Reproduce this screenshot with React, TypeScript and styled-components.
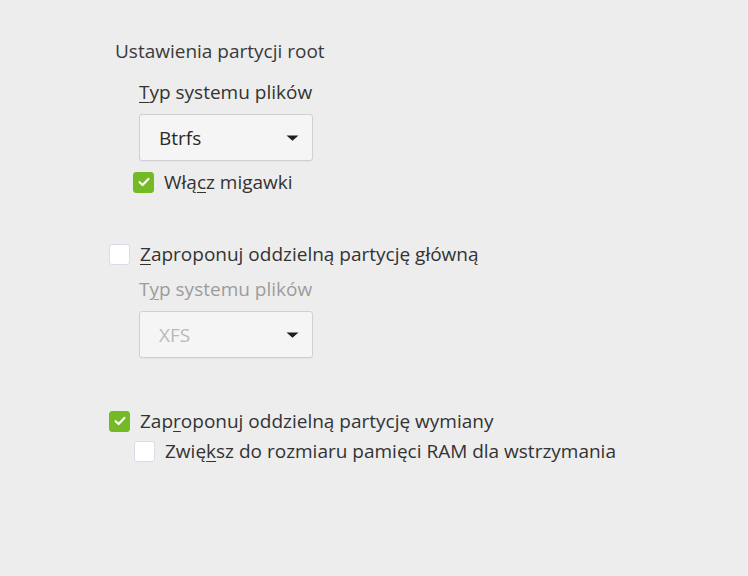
import React from "react";
import styled, { createGlobalStyle } from "styled-components";

const Global = createGlobalStyle`
  html, body { margin: 0; padding: 0; background: #ededed; }
  body { font-family: "Open Sans", "Noto Sans", sans-serif; color: #333; }
`;

const Page = styled.div`
  width: 748px;
  height: 576px;
  box-sizing: border-box;
  padding: 39px 0 0 109px;
  display: flex;
  flex-direction: column;
  font-size: 19px;
  line-height: 24px;
`;

const Heading = styled.div`
  margin-left: 6px;
  color: #3a3a3a;
`;

const Group = styled.div<{ $indent: number }>`
  display: flex;
  flex-direction: column;
  gap: 10px;
  margin-left: ${(p) => p.$indent}px;
`;

const Label = styled.div<{ $disabled?: boolean }>`
  color: ${(p) => (p.$disabled ? "#9c9c9c" : "#333")};
`;

const Select = styled.div<{ $disabled?: boolean }>`
  width: 174px;
  height: 47px;
  box-sizing: border-box;
  border: 1px solid #d0d0d0;
  border-radius: 3px;
  background: #f5f5f5;
  box-shadow: 0 1px 1px rgba(0, 0, 0, 0.04);
  display: flex;
  align-items: center;
  justify-content: space-between;
  padding: 0 13px 0 19px;
  color: ${(p) => (p.$disabled ? "#b9b9b9" : "#2a2a2a")};
`;

const Row = styled.div<{ $indent?: number }>`
  display: flex;
  align-items: center;
  gap: 10px;
  margin-left: ${(p) => p.$indent ?? 0}px;
  color: #333;
`;

const Box = styled.span<{ $checked?: boolean }>`
  width: 21px;
  height: 21px;
  box-sizing: border-box;
  border-radius: 3px;
  display: inline-flex;
  align-items: center;
  justify-content: center;
  background: ${(p) => (p.$checked ? "#73ba25" : "#ffffff")};
  border: 1px solid ${(p) => (p.$checked ? "#73ba25" : "#d8dbe8")};
  flex: none;
`;

const U = styled.span`
  text-decoration: underline;
  text-decoration-thickness: 1px;
  text-underline-offset: 3px;
`;

const Spacer = styled.div<{ $h: number }>`
  height: ${(p) => p.$h}px;
  flex: none;
`;

const Arrow = () => (
  <svg width="13" height="6" viewBox="0 0 13 6">
    <path d="M0.5 0.5 H12.5 L6.5 5.8 Z" fill="#1e1e1e" />
  </svg>
);

const Check = ({ checked }: { checked?: boolean }) => (
  <Box $checked={checked}>
    {checked && (
      <svg width="12" height="10" viewBox="0 0 12 10">
        <path
          d="M1.6 5.2 L4.6 8 L10.4 1.9"
          stroke="#fff"
          strokeWidth="2.2"
          fill="none"
          strokeLinecap="round"
          strokeLinejoin="round"
        />
      </svg>
    )}
  </Box>
);

export default function App() {
  return (
    <>
      <Global />
      <Page>
        <Heading>Ustawienia partycji root</Heading>
        <Spacer $h={17} />
        <Group $indent={30}>
          <Label>
            <U>T</U>yp systemu plików
          </Label>
          <Select>
            <span>Btrfs</span>
            <Arrow />
          </Select>
        </Group>
        <Spacer $h={9} />
        <Row $indent={24}>
          <Check checked />
          <span>
            Włą<U>c</U>z migawki
          </span>
        </Row>
        <Spacer $h={48} />
        <Row>
          <Check />
          <span>
            <U>Z</U>aproponuj oddzielną partycję główną
          </span>
        </Row>
        <Spacer $h={11} />
        <Group $indent={30}>
          <Label $disabled>
            T<U>y</U>p systemu plików
          </Label>
          <Select $disabled>
            <span>XFS</span>
            <Arrow />
          </Select>
        </Group>
        <Spacer $h={51} />
        <Row>
          <Check checked />
          <span>
            Zap<U>r</U>oponuj oddzielną partycję wymiany
          </span>
        </Row>
        <Spacer $h={6} />
        <Row $indent={25}>
          <Check />
          <span>
            Zwię<U>k</U>sz do rozmiaru pamięci RAM dla wstrzymania
          </span>
        </Row>
      </Page>
    </>
  );
}
